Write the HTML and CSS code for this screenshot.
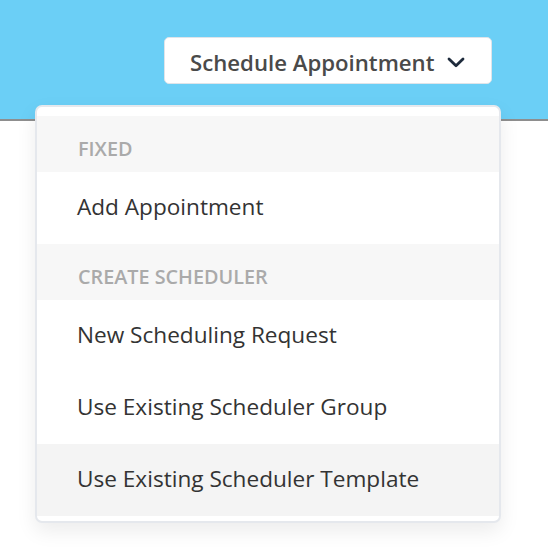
FILE: index.html
```html
<!DOCTYPE html>
<html lang="en">
<head>
<meta charset="utf-8">
<title>Schedule Appointment</title>
<link rel="stylesheet" href="styles.css">
</head>
<body>
<div class="page">
  <header class="topbar">
    <button class="schedule-btn" type="button">
      <span class="schedule-btn__label">Schedule Appointment</span>
      <svg class="schedule-btn__chevron" width="18" height="11" viewBox="0 0 18 11" aria-hidden="true">
        <polyline points="2,2 9,8.8 16,2" fill="none" stroke="#1e2b3c" stroke-width="2.8" stroke-linecap="round" stroke-linejoin="round"/>
      </svg>
    </button>
  </header>

  <div class="dropdown">
    <div class="dropdown__group">FIXED</div>
    <div class="dropdown__item">Add Appointment</div>
    <div class="dropdown__group">CREATE SCHEDULER</div>
    <div class="dropdown__item">New Scheduling Request</div>
    <div class="dropdown__item">Use Existing Scheduler Group</div>
    <div class="dropdown__item dropdown__item--active">Use Existing Scheduler Template</div>
  </div>
</div>
</body>
</html>
```
FILE: styles.css
```css
html, body {
  margin: 0;
  padding: 0;
  background: #ffffff;
}

body {
  font-family: "Open Sans", "Noto Sans", sans-serif;
}

.page {
  position: relative;
  width: 548px;
  height: 550px;
  overflow: hidden;
}

.topbar {
  box-sizing: border-box;
  height: 121px;
  background: #6bcff6;
  border-bottom: 2px solid #8e8e8e;
  display: flex;
  justify-content: flex-end;
  align-items: flex-start;
  padding: 37px 56px 0 0;
}

.schedule-btn {
  box-sizing: border-box;
  width: 328px;
  height: 47px;
  display: flex;
  align-items: center;
  justify-content: space-between;
  padding: 5px 26px 0 25px;
  background: #ffffff;
  border: 1px solid #dfe4e9;
  border-radius: 5px;
  font-family: "Open Sans", "Noto Sans", sans-serif;
  font-size: 22.2px;
  font-weight: 600;
  color: #4a4a4a;
  cursor: pointer;
}

.schedule-btn__label {
  line-height: 30px;
  white-space: nowrap;
}

.schedule-btn__chevron {
  display: block;
  margin-top: -2px;
}

.dropdown {
  position: absolute;
  top: 105px;
  left: 35px;
  box-sizing: border-box;
  width: 466px;
  height: 418px;
  padding: 9px 0 5px;
  background: #ffffff;
  border: 2px solid #e5e8ed;
  border-radius: 7px;
  box-shadow: 0 8px 20px rgba(0, 0, 0, 0.08);
}

.dropdown__group {
  box-sizing: border-box;
  height: 56px;
  padding: 20px 0 0 41px;
  line-height: 25px;
  background: #f7f7f7;
  color: #aaaaaa;
  font-size: 19.8px;
  font-weight: 600;
}

.dropdown__item {
  box-sizing: border-box;
  height: 72px;
  padding: 0 0 3px 40px;
  line-height: 69px;
  color: #333333;
  font-size: 22.6px;
  font-weight: 400;
  white-space: nowrap;
}

.dropdown__item--active {
  background: #f4f4f4;
}
```
